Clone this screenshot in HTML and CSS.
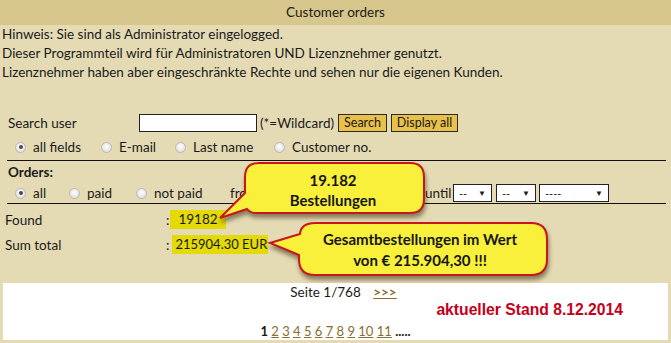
FILE: index.html
```html
<!DOCTYPE html>
<html lang="de">
<head>
    <meta charset="UTF-8">
    <title>Customer orders</title>
    <link rel="stylesheet" href="styles.css">
</head>
<body>
    <div class="page">
        <div class="title">Customer orders</div>
        <div class="intro">
            <div>Hinweis: Sie sind als Administrator eingelogged.</div>
            <div>Dieser Programmteil wird für Administratoren UND Lizenznehmer genutzt.</div>
            <div>Lizenznehmer haben aber eingeschränkte Rechte und sehen nur die eigenen Kunden.</div>
        </div>

        <div class="search-row">
            <span class="search-label">Search user</span>
            <span class="text-input"></span>
            <span class="hint">(*=Wildcard)</span>
            <span class="btn">Search</span>
            <span class="btn">Display all</span>
        </div>
        <div class="field-row">
            <span class="opt"><span class="radio on"></span>all fields</span>
            <span class="opt"><span class="radio"></span>E-mail</span>
            <span class="opt"><span class="radio"></span>Last name</span>
            <span class="opt"><span class="radio"></span>Customer no.</span>
        </div>
        <div class="rule"></div>

        <div class="orders-title">Orders:</div>
        <div class="orders-row">
            <span class="opt"><span class="radio on"></span>all</span>
            <span class="opt"><span class="radio"></span>paid</span>
            <span class="opt"><span class="radio"></span>not paid</span>
            <span class="opt">from</span>
            <span class="opt">until</span>
            <span class="select sel-day">--<i>▼</i></span>
            <span class="select sel-month">--<i>▼</i></span>
            <span class="select sel-year">----<i>▼</i></span>
        </div>
        <div class="rule"></div>

        <div class="stat-row">
            <span class="stat-label">Found</span>
            <span class="colon">:</span>
            <span class="hl hl-found">19182</span>
        </div>
        <div class="stat-row">
            <span class="stat-label">Sum total</span>
            <span class="colon">:</span>
            <span class="hl hl-sum">215904.30 EUR</span>
        </div>

        <div class="panel">
            <div class="pager-top">Seite 1/768 <a href="#" class="next">&gt;&gt;&gt;</a></div>
            <div class="stand">aktueller Stand 8.12.2014</div>
            <div class="pages">
                <b>1</b>
                <a href="#">2</a> <a href="#">3</a> <a href="#">4</a> <a href="#">5</a>
                <a href="#">6</a> <a href="#">7</a> <a href="#">8</a> <a href="#">9</a>
                <a href="#">10</a> <a href="#">11</a> <b>.....</b>
            </div>
        </div>

        <svg class="callouts" width="671" height="343" viewBox="0 0 671 343">
            <path class="bubble" d="M 259 163 H 410 Q 424 163 424 177 V 199 Q 424 213 410 213 H 257 Q 250 213 247 209 L 220 218 L 245 193 V 177 Q 245 163 259 163 Z"/>
            <path class="bubble" d="M 315 223 H 531 Q 547 223 547 239 V 259 Q 547 275 531 275 H 315 Q 299 275 299 259 V 255 L 270 243 L 300 234 Q 301 223 315 223 Z"/>
        </svg>
        <div class="callout-text note-found">19.182<br>Bestellungen</div>
        <div class="callout-text note-sum">Gesamtbestellungen im Wert<br>von € 215.904,30 !!!</div>
    </div>
</body>
</html>
```

FILE: styles.css
```css
body {
    margin: 0;
    background-color: #e4dab4;
    font-family: Lato, "Open Sans", sans-serif;
    font-size: 13.5px;
    color: #1a1a1a;
}
.page {
    position: relative;
    width: 671px;
    height: 343px;
    overflow: hidden;
}
.title {
    height: 25px;
    line-height: 25px;
    background-color: #d8c78c;
    text-align: center;
}
.intro {
    padding-left: 2px;
    line-height: 19px;
}
.search-row {
    display: flex;
    align-items: center;
    height: 18px;
    margin-top: 32px;
    padding-left: 8px;
}
.search-label {
    width: 131px;
}
.text-input {
    width: 116px;
    height: 16px;
    background-color: #ffffff;
    border: 1px solid #222222;
}
.hint {
    margin-left: 3px;
}
.btn {
    margin-left: 4px;
    height: 16px;
    line-height: 16px;
    padding: 0 5px;
    background-color: #e8c04a;
    border: 1px solid #2a2a2a;
    font-size: 12.5px;
}
.field-row,
.orders-row {
    display: grid;
    align-items: center;
    padding-left: 15px;
}
.field-row {
    grid-template-columns: 86px 74px 99px auto;
    height: 16px;
    margin-top: 7px;
}
.orders-row {
    grid-template-columns: 54px 67px 94px 195px 28px 43px 43px auto;
    height: 18px;
    margin-top: 4px;
}
.opt {
    display: flex;
    align-items: center;
    white-space: nowrap;
}
.radio {
    width: 9px;
    height: 9px;
    margin-right: 7px;
    border: 1px solid #b9b9b9;
    border-radius: 50%;
    background: radial-gradient(circle at 50% 40%, #ffffff, #d6d6d6);
    display: inline-flex;
    align-items: center;
    justify-content: center;
}
.radio.on::after {
    content: "";
    width: 4px;
    height: 4px;
    border-radius: 50%;
    background-color: #4a4a4a;
}
.rule {
    margin: 5px 5px 0 7px;
    border-top: 1px solid #111111;
}
.orders-title {
    font-weight: bold;
    margin-top: 3px;
    padding-left: 8px;
    line-height: 16px;
}
.select {
    display: flex;
    align-items: center;
    justify-content: space-between;
    height: 16px;
    padding: 0 5px;
    background-color: #ffffff;
    border: 1px solid #222222;
    font-size: 11px;
    box-sizing: content-box;
}
.select i {
    font-style: normal;
    font-size: 8px;
}
.sel-day { width: 27px; }
.sel-month { width: 28px; }
.sel-year { width: 58px; }
.orders-row + .rule {
    margin-top: 1px;
}
.stat-row {
    display: flex;
    align-items: center;
    height: 19px;
    margin-top: 6px;
    padding-left: 5px;
}
.stat-label {
    width: 161px;
}
.hl {
    background-color: #e3da08;
    line-height: 19px;
}
.hl-found {
    margin-left: 1px;
    padding: 0 8px 0 8px;
}
.hl-sum {
    margin-left: 3px;
    padding: 0 1px 0 3px;
    font-size: 13px;
}
.panel {
    margin: 29px 3px 0 3px;
    height: 57px;
    background-color: #ffffff;
}
.pager-top {
    padding-top: 1px;
    line-height: 17px;
    text-align: center;
    padding-left: 16px;
}
.next {
    margin-left: 9px;
    font-weight: bold;
    color: #8a6d2c;
}
.stand {
    line-height: 17px;
    text-align: right;
    padding-right: 45px;
    font-family: "Liberation Sans", Arial, sans-serif;
    font-weight: bold;
    font-size: 15.7px;
    color: #c4001a;
}
.pages {
    margin-top: 5px;
    line-height: 17px;
    text-align: center;
    font-size: 13px;
}
.pages a {
    color: #8a6d2c;
}
.callouts {
    position: absolute;
    top: 0;
    left: 0;
    pointer-events: none;
}
.bubble {
    fill: #f8f03a;
    stroke: #c8161a;
    stroke-width: 2;
    filter: drop-shadow(1px 4px 2px rgba(60, 50, 20, 0.55));
}
.callout-text {
    position: absolute;
    text-align: center;
    font-weight: bold;
    font-size: 15px;
    color: #161616;
}
.note-found {
    left: 258px;
    top: 170px;
    width: 150px;
    line-height: 20px;
}
.note-sum {
    left: 300px;
    top: 229px;
    width: 240px;
    line-height: 21px;
}
```
